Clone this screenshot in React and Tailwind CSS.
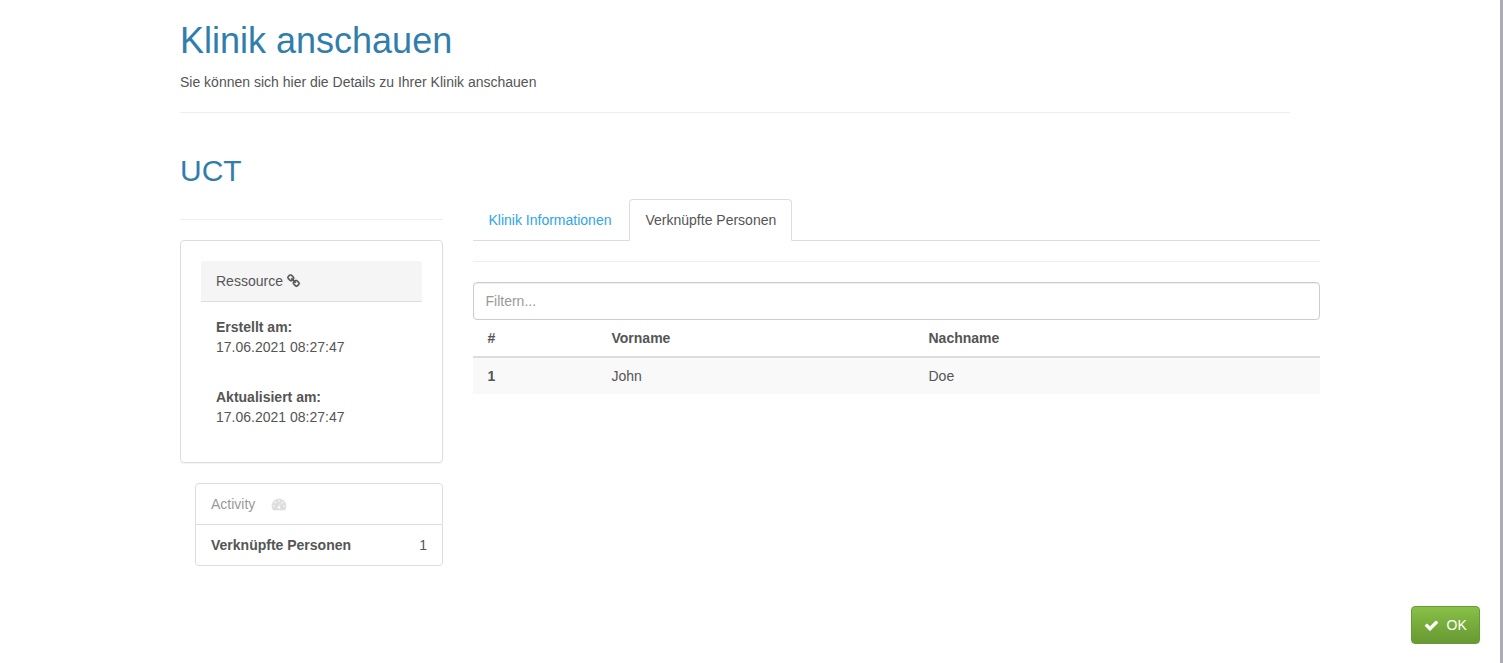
import React from "react";

const LINK =
  "M1456 1216q0-40-28-68l-208-208q-28-28-68-28-42 0-72 32 3 3 19 18.5t21.5 21.5 15 19 13 25.5 3.5 27.5q0 40-28 68t-68 28q-15 0-27.5-3.5t-25.5-13-19-15-21.5-21.5-18.5-19q-33 31-33 73 0 40 28 68l206 207q27 27 68 27 40 0 68-26l147-146q28-28 28-67zm-703-705q0-40-28-68l-206-207q-28-28-68-28-39 0-68 27l-147 146q-28 28-28 67 0 40 28 68l208 208q27 27 68 27 42 0 72-31-3-3-19-18.5t-21.5-21.5-15-19-13-25.5-3.5-27.5q0-40 28-68t68-28q15 0 27.5 3.5t25.5 13 19 15 21.5 21.5 18.5 19q33-31 33-73zm895 705q0 120-85 203l-147 146q-83 83-203 83-121 0-204-85l-206-207q-83-83-83-203 0-123 88-209l-88-88q-86 88-208 88-120 0-204-84l-208-208q-84-84-84-204t85-203l147-146q83-83 203-83 121 0 204 85l206 207q83 83 83 203 0 123-88 209l88 88q86-88 208-88 120 0 204 84l208 208q84 84 84 204z";
const CHECK =
  "M1671 566q0 40-28 68l-724 724-136 136q-28 28-68 28t-68-28l-136-136-362-362q-28-28-28-68t28-68l136-136q28-28 68-28t68 28l294 295 656-657q28-28 68-28t68 28l136 136q28 28 28 68z";
const GAUGE =
  "M384 1152q0-53-37.5-90.5t-90.5-37.5-90.5 37.5-37.5 90.5 37.5 90.5 90.5 37.5 90.5-37.5 37.5-90.5zm192-448q0-53-37.5-90.5t-90.5-37.5-90.5 37.5-37.5 90.5 37.5 90.5 90.5 37.5 90.5-37.5 37.5-90.5zm428 481l101-382q6-26-7.5-48.5t-38.5-29.5-48 6.5-30 39.5l-101 382q-60 5-107 43.5t-63 98.5q-20 77 20 146t117 89 146-20 89-117q16-60-6-117t-72-91zm660-33q0-53-37.5-90.5t-90.5-37.5-90.5 37.5-37.5 90.5 37.5 90.5 90.5 37.5 90.5-37.5 37.5-90.5zm-640-640q0-53-37.5-90.5t-90.5-37.5-90.5 37.5-37.5 90.5 37.5 90.5 90.5 37.5 90.5-37.5 37.5-90.5zm448 192q0-53-37.5-90.5t-90.5-37.5-90.5 37.5-37.5 90.5 37.5 90.5 90.5 37.5 90.5-37.5 37.5-90.5zm320 448q0 261-141 483-19 29-54 29h-1402q-35 0-54-29-141-221-141-483 0-182 71-348t191-286 286-191 348-71 348 71 286 191 191 286 71 348z";

function Icon({ path, className }) {
  return (
    <svg viewBox="0 0 1792 1792" fill="currentColor" stroke="currentColor" className={className} aria-hidden="true">
      <path d={path} />
    </svg>
  );
}

function Sidebar() {
  return (
    <aside className="w-[263px] shrink-0">
      <hr className="mt-5 border-[#eee]" />
      <section className="mt-5 h-[223px] rounded border border-[#ddd] p-5 shadow-[0_1px_1px_rgba(0,0,0,0.05)]">
        <div className="flex h-[41px] items-center gap-1 rounded-t-[3px] border-b border-[#ddd] bg-[#f5f5f5] px-[15px]">
          <span>Ressource</span>
          <Icon path={LINK} className="size-3.5 stroke-[30]" />
        </div>
        <dl className="px-[15px] pt-[15px]">
          <dt className="font-bold">Erstellt am:</dt>
          <dd>17.06.2021 08:27:47</dd>
          <dt className="mt-[30px] font-bold">Aktualisiert am:</dt>
          <dd>17.06.2021 08:27:47</dd>
        </dl>
      </section>
      <ul className="mt-5 ml-[15px] rounded border border-[#ddd]">
        <li className="flex h-10 items-center gap-[17px] px-[15px] text-[#999]">
          <span>Activity</span>
          <Icon path={GAUGE} className="size-3.5 overflow-visible stroke-[80] text-[#ddd]" />
        </li>
        <li className="flex h-[41px] items-center justify-between border-t border-[#ddd] px-[15px]">
          <strong className="font-bold">Verknüpfte Personen</strong>
          <span>1</span>
        </li>
      </ul>
    </aside>
  );
}

function Persons() {
  return (
    <main className="w-[847px] shrink-0">
      <nav className="flex h-[42px] items-stretch">
        <a className="flex w-[156px] items-center border-b border-[#ddd] pl-[15.5px] text-[#2fa4e7]">
          Klinik Informationen
        </a>
        <a className="flex w-[163px] items-center rounded-t border border-b-transparent border-[#ddd] pl-[15.5px]">
          Verknüpfte Personen
        </a>
        <span className="grow border-b border-[#ddd]" />
      </nav>
      <hr className="mt-5 border-[#eee]" />
      <input
        placeholder="Filtern..."
        className="mt-5 block h-[38px] w-full rounded border border-[#ccc] bg-white px-[11.5px] py-2 shadow-[inset_0_1px_1px_rgba(0,0,0,0.075)] outline-none placeholder:text-[#999]"
      />
      <table className="w-full table-fixed border-collapse text-left">
        <colgroup>
          <col className="w-[124px]" />
          <col className="w-[317px]" />
          <col />
        </colgroup>
        <thead>
          <tr className="h-[37px] border-b-2 border-[#ddd]">
            <th className="pl-[14.5px] font-bold">#</th>
            <th className="pl-[14.5px] font-bold">Vorname</th>
            <th className="pl-[14.5px] font-bold">Nachname</th>
          </tr>
        </thead>
        <tbody>
          <tr className="h-[37px] bg-[#f9f9f9]">
            <th className="pl-[14.5px] font-bold">1</th>
            <td className="pl-[14.5px]">John</td>
            <td className="pl-[14.5px]">Doe</td>
          </tr>
        </tbody>
      </table>
    </main>
  );
}

export default function App() {
  return (
    <div className="flex h-[663px] flex-col overflow-hidden border-r-3 border-[#adacb3] bg-white pr-5 pl-[180px] font-['Liberation_Sans',Arial,sans-serif] text-sm leading-5 text-[#555]">
      <header className="w-[1110px] shrink-0">
        <h1 className="mt-[21px] text-[36px] leading-10 text-[#317eac]">Klinik anschauen</h1>
        <p className="mt-[11px]">Sie können sich hier die Details zu Ihrer Klinik anschauen</p>
        <hr className="mt-5 border-[#eee]" />
      </header>
      <h2 className="mt-[41px] text-[30px] leading-[33px] text-[#317eac]">UCT</h2>
      <div className="mt-3 flex gap-[30px]">
        <Sidebar />
        <Persons />
      </div>
      <button className="mt-auto mb-[19px] flex h-[38px] w-[69px] items-center gap-2 self-end rounded border border-[#699934] bg-[linear-gradient(#88c149,#73a839_60%,#699934)] pl-[11.5px] text-white">
        <Icon path={CHECK} className="size-[15px] stroke-[30]" />
        <span>OK</span>
      </button>
    </div>
  );
}
